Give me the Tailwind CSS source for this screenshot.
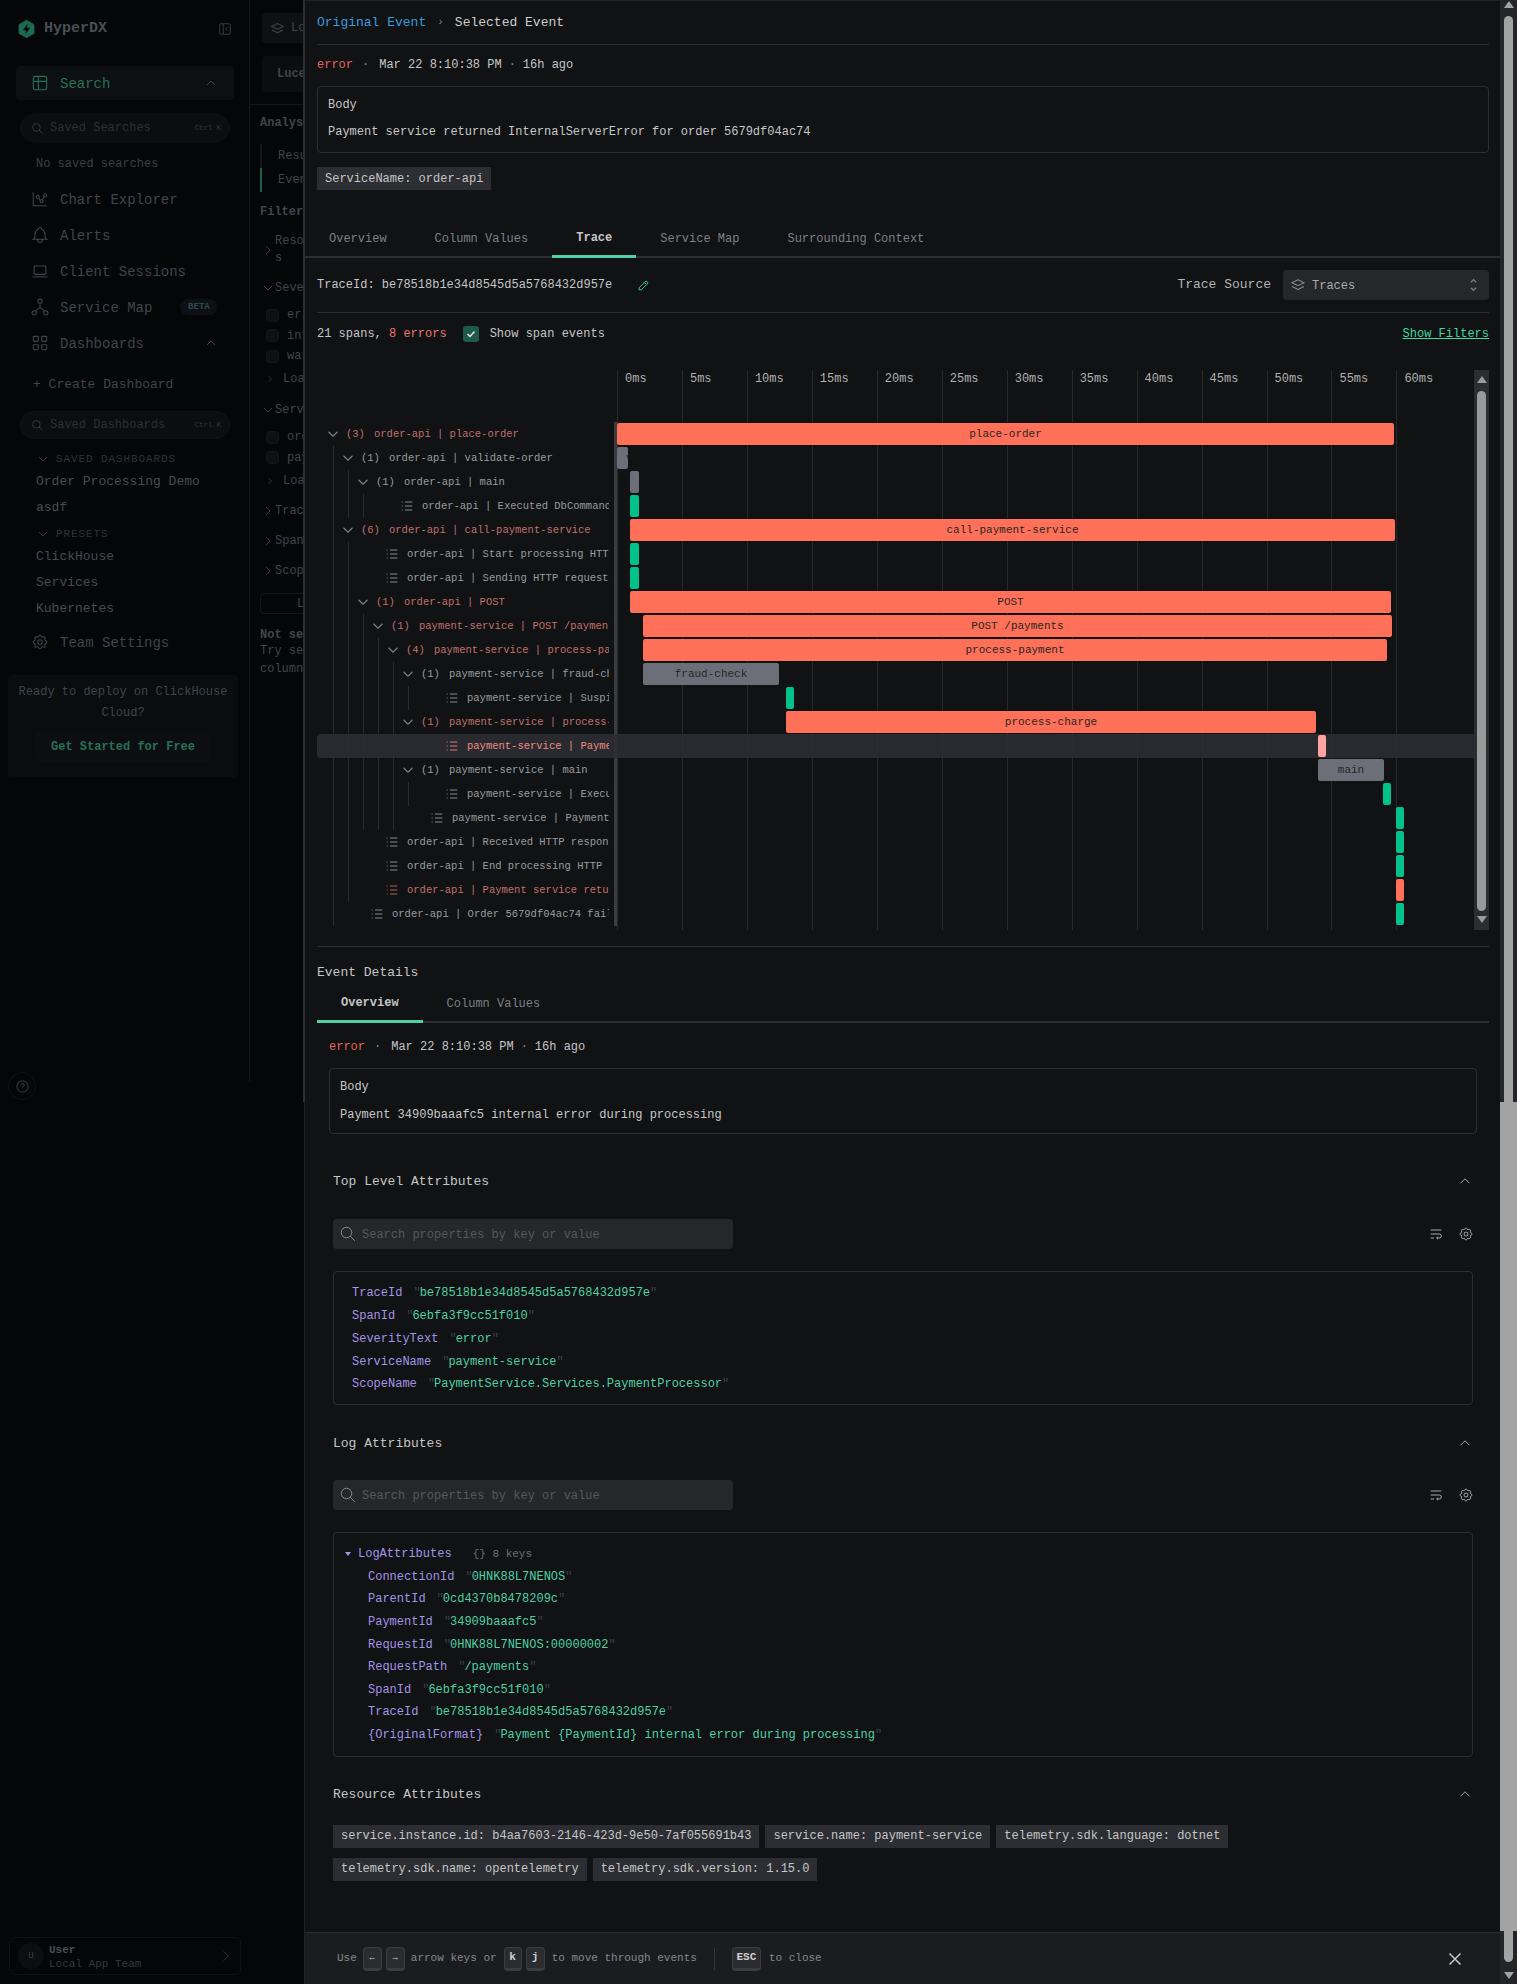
<!DOCTYPE html>
<html lang="en">
<head>
  <meta charset="UTF-8">
  <title>HyperDX</title>
  <meta name="viewport" content="width=device-width, initial-scale=1.0">
  <script src="https://cdn.jsdelivr.net/npm/@tailwindcss/browser@4"></script>
</head>
<body class="bg-[#050608] font-['Liberation_Mono',monospace] text-xs">

<svg class="hidden">
  <symbol id="i-table" viewBox="0 0 24 24"><rect x="4" y="4" width="16" height="16" rx="2"/><path d="M4 10h16M10 4v16"/></symbol>
  <symbol id="i-chart" viewBox="0 0 24 24"><path d="M3 3v18h18"/><circle cx="9" cy="9" r="2"/><circle cx="19" cy="7" r="2"/><circle cx="14" cy="15" r="2"/><path d="M10.16 10.62l2.34 2.88M15.088 13.328l2.837 -4.586"/></symbol>
  <symbol id="i-bell" viewBox="0 0 24 24"><path d="M10 5a2 2 0 1 1 4 0a7 7 0 0 1 4 6v3a4 4 0 0 0 2 3h-16a4 4 0 0 0 2 -3v-3a7 7 0 0 1 4 -6"/><path d="M9 17v1a3 3 0 0 0 6 0v-1"/></symbol>
  <symbol id="i-laptop" viewBox="0 0 24 24"><path d="M3 19h18"/><rect x="5" y="6" width="14" height="10" rx="1"/></symbol>
  <symbol id="i-hierarchy" viewBox="0 0 24 24"><circle cx="12" cy="5" r="2.5"/><circle cx="5" cy="19" r="2.5"/><circle cx="19" cy="19" r="2.5"/><path d="M6.5 17l5.5 -4.5l5.5 4.5M12 7.5v5"/></symbol>
  <symbol id="i-grid" viewBox="0 0 24 24"><rect x="4" y="4" width="6" height="6" rx="1"/><rect x="14" y="4" width="6" height="6" rx="1"/><rect x="4" y="14" width="6" height="6" rx="1"/><rect x="14" y="14" width="6" height="6" rx="1"/></symbol>
  <symbol id="i-gear" viewBox="0 0 24 24"><path d="M10.325 4.317c.426 -1.756 2.924 -1.756 3.35 0a1.724 1.724 0 0 0 2.573 1.066c1.543 -.94 3.31 .826 2.37 2.37a1.724 1.724 0 0 0 1.065 2.572c1.756 .426 1.756 2.924 0 3.35a1.724 1.724 0 0 0 -1.066 2.573c.94 1.543 -.826 3.31 -2.37 2.37a1.724 1.724 0 0 0 -2.572 1.065c-.426 1.756 -2.924 1.756 -3.35 0a1.724 1.724 0 0 0 -2.573 -1.066c-1.543 .94 -3.31 -.826 -2.37 -2.37a1.724 1.724 0 0 0 -1.065 -2.572c-1.756 -.426 -1.756 -2.924 0 -3.35a1.724 1.724 0 0 0 1.066 -2.573c-.94 -1.543 .826 -3.31 2.37 -2.37c1 .608 2.296 .07 2.572 -1.065z"/><circle cx="12" cy="12" r="3"/></symbol>
  <symbol id="i-search" viewBox="0 0 24 24"><circle cx="10" cy="10" r="7"/><path d="M21 21l-6 -6"/></symbol>
  <symbol id="i-up" viewBox="0 0 24 24"><path d="M6 15l6 -6l6 6"/></symbol>
  <symbol id="i-down" viewBox="0 0 24 24"><path d="M6 9l6 6l6 -6"/></symbol>
  <symbol id="i-right" viewBox="0 0 24 24"><path d="M9 6l6 6l-6 6"/></symbol>
  <symbol id="i-stack" viewBox="0 0 24 24"><path d="M12 5l-8 4l8 4l8 -4l-8 -4"/><path d="M4 14l8 4l8 -4"/></symbol>
  <symbol id="i-list" viewBox="0 0 24 24"><path d="M9 6h11M9 12h11M9 18h11M4 6h1.5M4 12h1.5M4 18h1.5"/></symbol>
  <symbol id="i-wrap" viewBox="0 0 24 24"><path d="M4 6h16M4 18h5M4 12h13a3 3 0 0 1 0 6h-4l2 -2m0 4l-2 -2"/></symbol>
</svg>

<div class="relative w-[1517px] h-[1984px] overflow-hidden flex">

  <!-- left nav -->
  <aside class="w-[250px] h-full flex flex-col shrink-0 relative text-[#3f454b]">
    <div class="h-[1082px] border-r border-[#14171a] absolute inset-x-0 top-0"></div>
    <div class="h-[58px] shrink-0 flex items-center pl-[17px] pr-[16px] relative">
      <svg class="w-[19px] h-[20px]" viewBox="0 0 24 24"><path d="M12 1l9.5 5.5v11L12 23l-9.5-5.5v-11z" fill="#1c6b50" stroke="#1c6b50" stroke-linejoin="round"/><path d="M13.5 5L7.5 13.5h4l-1 5.5 6-8.5h-4z" fill="#050608"/></svg>
      <span class="ml-2 text-[15px] font-bold text-[#484e54]">HyperDX</span>
      <svg class="w-[14px] h-[14px] ml-auto mr-[2px] text-[#3c4247]" fill="none" stroke="currentColor" stroke-width="1.5" viewBox="0 0 24 24"><rect x="3" y="3" width="18" height="18" rx="2"/><path d="M9 3v18M16 9l-3 3l3 3"/></svg>
    </div>
    <div class="relative mt-2 mx-4 w-[218px] h-[34px] shrink-0 rounded bg-[#0d0f11] flex items-center pl-[14px] pr-[15px] text-[#26705a] text-sm">
      <svg class="w-[20px] h-[20px]" fill="none" stroke="currentColor" stroke-width="1.3"><use href="#i-table"/></svg>
      <span class="ml-[10px] translate-y-px">Search</span>
      <svg class="w-[16px] h-[16px] ml-auto text-[#3c4247]" fill="none" stroke="currentColor" stroke-width="1.5"><use href="#i-up"/></svg>
    </div>
    <div class="relative mt-[14px] ml-5 w-[210px] h-[28px] shrink-0 rounded-full bg-[#0b0d0f] border border-[#101316] flex items-center pl-[10px] pr-2 text-[#2c3136]">
      <svg class="w-[13px] h-[13px] text-[#3c4247]" fill="none" stroke="currentColor" stroke-width="1.5"><use href="#i-search"/></svg>
      <span class="ml-[6px]">Saved Searches</span>
      <span class="ml-auto text-[8px] tracking-[-0.4px] text-[#33393e]">Ctrl K</span>
    </div>
    <div class="relative mt-3 ml-9 h-[18px] leading-[18px] shrink-0 text-[#394045] translate-y-px">No saved searches</div>

    <div class="relative mt-[9px] flex flex-col text-sm">
      <div class="h-9 flex items-center pl-[31px]"><svg class="w-[18px] h-[18px]" fill="none" stroke="currentColor" stroke-width="1.4"><use href="#i-chart"/></svg><span class="ml-[11px] translate-y-px">Chart Explorer</span></div>
      <div class="h-9 flex items-center pl-[30px]"><svg class="w-[20px] h-[20px]" fill="none" stroke="currentColor" stroke-width="1.3"><use href="#i-bell"/></svg><span class="ml-[10px] translate-y-px">Alerts</span></div>
      <div class="h-9 flex items-center pl-[30px]"><svg class="w-[20px] h-[20px]" fill="none" stroke="currentColor" stroke-width="1.3"><use href="#i-laptop"/></svg><span class="ml-[10px] translate-y-px">Client Sessions</span></div>
      <div class="h-9 flex items-center pl-[30px]"><svg class="w-[20px] h-[20px]" fill="none" stroke="currentColor" stroke-width="1.3"><use href="#i-hierarchy"/></svg><span class="ml-[10px] translate-y-px">Service Map</span><span class="ml-[28px] w-[37px] h-4 rounded-full bg-[#0e1114] text-[9px] font-bold text-[#2f4a55] flex items-center justify-center">BETA</span></div>
      <div class="h-9 flex items-center pl-[30px] pr-[31px]"><svg class="w-[20px] h-[20px]" fill="none" stroke="currentColor" stroke-width="1.3"><use href="#i-grid"/></svg><span class="ml-[10px] translate-y-px">Dashboards</span><svg class="w-[16px] h-[16px] ml-auto text-[#3c4247]" fill="none" stroke="currentColor" stroke-width="1.5"><use href="#i-up"/></svg></div>
    </div>
    <div class="relative mt-[14px] ml-[33px] h-[18px] leading-[18px] text-[13px] translate-y-px">+ Create Dashboard</div>
    <div class="relative mt-[18px] ml-5 w-[210px] h-[28px] shrink-0 rounded-full bg-[#0b0d0f] border border-[#101316] flex items-center pl-[10px] pr-2 text-[#2c3136]">
      <svg class="w-[13px] h-[13px] text-[#3c4247]" fill="none" stroke="currentColor" stroke-width="1.5"><use href="#i-search"/></svg>
      <span class="ml-[6px]">Saved Dashboards</span>
      <span class="ml-auto text-[8px] tracking-[-0.4px] text-[#33393e]">Ctrl K</span>
    </div>
    <div class="relative mt-[13px] ml-[35px] h-[14px] flex items-center text-[11px] tracking-[0.9px] text-[#2e3338]"><svg class="w-[16px] h-[16px] text-[#33393e]" fill="none" stroke="currentColor" stroke-width="1.5"><use href="#i-down"/></svg><span class="ml-[5px]">SAVED DASHBOARDS</span></div>
    <div class="relative mt-[2.5px] ml-9 flex flex-col text-[13px] text-[#464c52]">
      <div class="h-[26px] leading-[26px]">Order Processing Demo</div>
      <div class="h-[26px] leading-[26px]">asdf</div>
    </div>
    <div class="relative mt-[6.5px] ml-[35px] h-[14px] flex items-center text-[11px] tracking-[0.9px] text-[#2e3338]"><svg class="w-[16px] h-[16px] text-[#33393e]" fill="none" stroke="currentColor" stroke-width="1.5"><use href="#i-down"/></svg><span class="ml-[5px]">PRESETS</span></div>
    <div class="relative mt-[2.5px] ml-9 flex flex-col text-[13px] text-[#464c52]">
      <div class="h-[26px] leading-[26px]">ClickHouse</div>
      <div class="h-[26px] leading-[26px]">Services</div>
      <div class="h-[26px] leading-[26px]">Kubernetes</div>
    </div>
    <div class="relative mt-[2.5px] h-9 flex items-center pl-[31px] text-sm"><svg class="w-[18px] h-[18px]" fill="none" stroke="currentColor" stroke-width="1.4"><use href="#i-gear"/></svg><span class="ml-[11px] translate-y-px">Team Settings</span></div>
    <div class="relative mt-[15px] mx-2 w-[230px] h-[102px] bg-[#0a0c0e] rounded flex flex-col items-center pt-[7px]">
      <div class="h-[21px] leading-[21px] whitespace-nowrap">Ready to deploy on ClickHouse</div>
      <div class="h-[21px] leading-[21px]">Cloud?</div>
      <div class="mt-[8px] w-[176px] h-[30px] rounded bg-[#0c0e10] flex items-center justify-center font-bold text-[#26705a]">Get Started for Free</div>
    </div>
    <!-- help bubble -->
    <div class="absolute left-2 top-[1072px] w-7 h-7 rounded-full border border-[#101316] flex items-center justify-center text-[#3c4247]">
      <svg class="w-[15px] h-[15px]" fill="none" stroke="currentColor" stroke-width="1.5" viewBox="0 0 24 24"><circle cx="12" cy="12" r="9"/><path d="M12 17v.01M12 13.5a1.5 1.5 0 0 1 1 -1.5a2.6 2.6 0 1 0 -3 -4"/></svg>
    </div>
    <div class="mt-auto mb-[9px] ml-[9px] w-[232px] h-[38px] shrink-0 rounded-md border border-[#0f1215] flex items-center pl-2 pr-[5px]">
      <div class="w-[26px] h-[26px] rounded-full bg-[#0c0e10] flex items-center justify-center text-[9px] text-[#3c4247]">U</div>
      <div class="ml-[5px] flex flex-col text-[11px] translate-y-px">
        <span class="font-bold text-[#4a5056] leading-[14px]">User</span>
        <span class="text-[#33393e] leading-[14px]">Local App Team</span>
      </div>
      <svg class="w-[18px] h-[18px] ml-auto text-[#3c4247]" fill="none" stroke="currentColor" stroke-width="1.2"><use href="#i-right"/></svg>
    </div>
  </aside>

  <!-- search page behind the drawer -->
  <main class="w-[160px] shrink-0 h-[1082px] overflow-hidden whitespace-nowrap text-[#3f454b]">
    <div class="mt-[13px] ml-3 h-[30px] rounded bg-[#0e1012] flex items-center pl-[7px]">
      <svg class="w-[17px] h-[17px]" fill="none" stroke="currentColor" stroke-width="1.5"><use href="#i-stack"/></svg><span class="ml-[5px]">Logs</span>
    </div>
    <div class="mt-[13px] ml-3 h-9 rounded bg-[#0b0d0f] flex items-center pl-[15px] font-bold">Lucene</div>
    <div class="mt-3 border-t border-[#14171a]"></div>
    <div class="mt-[11px] ml-[10px] h-[14px] leading-[14px] font-bold">Analysis</div>
    <div class="mt-[14px] ml-[10px] flex flex-col">
      <div class="h-6 leading-6 pl-4 border-l-2 border-[#14171a]">Results</div>
      <div class="h-6 leading-6 pl-4 border-l-2 border-[#1d5c48]">Events</div>
    </div>
    <div class="mt-[13px] ml-[10px] h-[14px] leading-[14px] font-bold">Filters</div>
    <div class="mt-[13.5px] ml-[10px] flex items-center h-[34px]">
      <svg class="w-[16px] h-[16px]" fill="none" stroke="currentColor" stroke-width="1.3"><use href="#i-right"/></svg>
      <div class="-ml-[1px] leading-[17px]">Resource<br>s</div>
    </div>
    <div class="mt-[13.5px] ml-[10px] h-4 flex items-center"><svg class="w-[16px] h-[16px]" fill="none" stroke="currentColor" stroke-width="1.3"><use href="#i-down"/></svg><span class="-ml-[1px]">Severity</span></div>
    <div class="mt-[9px] ml-4 flex flex-col">
      <div class="h-[20.5px] flex items-center"><span class="w-[13px] h-[13px] rounded-sm bg-[#0e1012] border border-[#14171a]"></span><span class="ml-2">error</span></div>
      <div class="h-[20.5px] flex items-center"><span class="w-[13px] h-[13px] rounded-sm bg-[#0e1012] border border-[#14171a]"></span><span class="ml-2">info</span></div>
      <div class="h-[20.5px] flex items-center"><span class="w-[13px] h-[13px] rounded-sm bg-[#0e1012] border border-[#14171a]"></span><span class="ml-2">warn</span></div>
    </div>
    <div class="mt-[4.5px] ml-[14px] h-4 flex items-center"><svg class="w-[12px] h-[12px]" fill="none" stroke="currentColor" stroke-width="1.5"><use href="#i-right"/></svg><span class="ml-[7px]">Load more</span></div>
    <div class="mt-[15px] ml-[10px] h-4 flex items-center"><svg class="w-[16px] h-[16px]" fill="none" stroke="currentColor" stroke-width="1.3"><use href="#i-down"/></svg><span class="-ml-[1px]">ServiceName</span></div>
    <div class="mt-[9px] ml-4 flex flex-col">
      <div class="h-[20.5px] flex items-center"><span class="w-[13px] h-[13px] rounded-sm bg-[#0e1012] border border-[#14171a]"></span><span class="ml-2">order-api</span></div>
      <div class="h-[20.5px] flex items-center"><span class="w-[13px] h-[13px] rounded-sm bg-[#0e1012] border border-[#14171a]"></span><span class="ml-2">payment</span></div>
    </div>
    <div class="mt-[5px] ml-[14px] h-4 flex items-center"><svg class="w-[12px] h-[12px]" fill="none" stroke="currentColor" stroke-width="1.5"><use href="#i-right"/></svg><span class="ml-[7px]">Load more</span></div>
    <div class="mt-[14px] ml-[10px] h-4 flex items-center"><svg class="w-[16px] h-[16px]" fill="none" stroke="currentColor" stroke-width="1.3"><use href="#i-right"/></svg><span class="-ml-[1px]">TraceId</span></div>
    <div class="mt-[14px] ml-[10px] h-4 flex items-center"><svg class="w-[16px] h-[16px]" fill="none" stroke="currentColor" stroke-width="1.3"><use href="#i-right"/></svg><span class="-ml-[1px]">SpanName</span></div>
    <div class="mt-[14px] ml-[10px] h-4 flex items-center"><svg class="w-[16px] h-[16px]" fill="none" stroke="currentColor" stroke-width="1.3"><use href="#i-right"/></svg><span class="-ml-[1px]">ScopeName</span></div>
    <div class="mt-[14px] ml-[10px] h-[21px] rounded border border-[#14171a] pl-[36px] leading-[20px]">Load</div>
    <div class="mt-[13px] ml-[10px] h-4 leading-4 font-bold">Not seeing</div>
    <div class="ml-[10px] h-4 leading-4">Try searching</div>
    <div class="mt-[2px] ml-[10px] h-4 leading-4">column:</div>
  </main>

  <!-- event drawer -->
  <section class="absolute left-[304px] top-0 w-[1196px] h-[1984px] bg-[#101214] border-l border-[#202226] border-t text-[#c6c6c6] overflow-hidden">
    <div class="pl-3 pr-[11px]">
      <div class="h-[44px] border-b border-[#2c2e33] flex items-center text-[13px]">
        <span class="text-[#3d9bdc]">Original Event</span>
        <span class="ml-[11px] text-[#808387] text-[11px]">›</span>
        <span class="ml-[11px] text-[#cdcdcd]">Selected Event</span>
      </div>
      <div class="mt-[11px] h-[18px] flex items-center">
        <span class="text-[#e5645a]">error</span>
        <span class="ml-[9px] text-[#808387]">·</span>
        <span class="ml-[10px]">Mar 22 8:10:38 PM</span>
        <span class="ml-[7px] text-[#808387]">·</span>
        <span class="ml-[7px]">16h ago</span>
      </div>
      <div class="mt-3 h-[67px] border border-[#2c2e33] rounded pl-[10px] pt-[9px] text-[#c8c8c8]">
        <div class="h-[18px] leading-[18px]">Body</div>
        <div class="mt-[9px] h-[18px] leading-[18px]">Payment service returned InternalServerError for order 5679df04ac74</div>
      </div>
      <div class="mt-[14px] inline-flex h-[23px] items-center px-2 bg-[#2c2e33]">ServiceName: order-api</div>
    </div>

    <div class="mt-[30px] h-[38px] flex border-b-2 border-[#2c2e33] text-[#7d8084]">
      <div class="px-6 h-[38px] flex items-center">Overview</div>
      <div class="px-6 h-[38px] flex items-center">Column Values</div>
      <div class="px-6 h-[38px] flex items-center font-bold text-[#c6c6c6] border-b-[3px] border-[#4fd1a5]">Trace</div>
      <div class="px-6 h-[38px] flex items-center">Service Map</div>
      <div class="px-6 h-[38px] flex items-center">Surrounding Context</div>
    </div>

    <div class="pl-3 pr-[11px]">
      <div class="mt-3 h-[30px] flex items-center">
        <span>TraceId: be78518b1e34d8545d5a5768432d957e</span>
        <svg class="ml-[25px] w-[13px] h-[13px] text-[#4fd1a5]" fill="none" stroke="currentColor" stroke-width="1.7" viewBox="0 0 24 24"><path d="M4 20h4L19 9a2.8 2.8 0 0 0-4-4L4 16z"/><path d="M13.5 6.5l4 4"/></svg>
        <span class="ml-auto text-[13px] text-[#b4b4b4]">Trace Source</span>
        <div class="ml-3 w-[206px] h-[30px] rounded bg-[#25272b] flex items-center pl-[6px] pr-[10px] text-[#a9abae]">
          <svg class="w-[18px] h-[18px] text-[#8a8c90]" fill="none" stroke="currentColor" stroke-width="1.4"><use href="#i-stack"/></svg>
          <span class="ml-[5px] mt-[2px]">Traces</span>
          <svg class="ml-auto w-[11px] h-[16px] text-[#777a7e]" fill="none" stroke="currentColor" stroke-width="1.5" viewBox="0 0 12 18"><path d="M3 6l3-3l3 3M3 12l3 3l3-3"/></svg>
        </div>
      </div>
      <div class="mt-3 h-[1px] bg-[#2c2e33]"></div>
      <div class="mt-3 h-[18px] flex items-center">
        <span>21 spans, <span class="text-[#e8766d]">8 errors</span></span>
        <span class="ml-[16px] w-4 h-4 rounded-[3px] bg-[#1e5a48] flex items-center justify-center">
          <svg class="w-3 h-3 text-[#e6e6e6]" fill="none" stroke="currentColor" stroke-width="3" viewBox="0 0 24 24"><path d="M5 12l5 5l9 -10"/></svg>
        </span>
        <span class="ml-[11px]">Show span events</span>
        <span class="ml-auto text-[#3fd8a0] underline">Show Filters</span>
      </div>

      <!-- trace waterfall -->
      <div class="mt-[27px] h-[560px] flex">
        <div id="waterfall" class="relative flex-1 overflow-hidden">
          <div id="ticks" class="absolute left-[300px] top-0 bottom-0 right-0"></div>
          <div class="absolute left-[297px] top-[52px] w-[3px] h-[504px] bg-[#3a3c40]"></div>
          <div class="h-[52px]"></div>
          <div id="rows" class="relative"></div>
        </div>
        <div class="relative w-[15px] bg-[#2b2d31] shrink-0">
          <div class="mx-auto mt-[6px] w-0 h-0 border-x-[5px] border-x-transparent border-b-[7px] border-b-[#9a9a9a]"></div>
          <div class="mx-auto mt-[8px] w-[9px] h-[520px] rounded-full bg-[#9a9a9a]"></div>
          <div class="mx-auto mt-[5px] w-0 h-0 border-x-[5px] border-x-transparent border-t-[7px] border-t-[#9a9a9a]"></div>
        </div>
      </div>

      <div class="mt-4 h-[1px] bg-[#2c2e33]"></div>
      <div class="mt-4 h-5 leading-5 text-[13px]">Event Details</div>
      <div class="mt-[2px] h-[38px] flex border-b-2 border-[#2c2e33] text-[#7d8084]">
        <div class="px-6 h-[38px] flex items-center font-bold text-[#c6c6c6] border-b-[3px] border-[#4fd1a5]">Overview</div>
        <div class="px-6 h-[38px] flex items-center">Column Values</div>
      </div>

      <div class="px-3">
        <div class="mt-[15px] h-[18px] flex items-center">
          <span class="text-[#e5645a]">error</span>
          <span class="ml-[9px] text-[#808387]">·</span>
          <span class="ml-[10px]">Mar 22 8:10:38 PM</span>
          <span class="ml-[7px] text-[#808387]">·</span>
          <span class="ml-[7px]">16h ago</span>
        </div>
        <div class="mt-3 h-[66px] border border-[#2c2e33] rounded pl-[10px] pt-[9px] text-[#c8c8c8]">
          <div class="h-[18px] leading-[18px]">Body</div>
          <div class="mt-[10px] h-[18px] leading-[18px]">Payment 34909baaafc5 internal error during processing</div>
        </div>
      </div>

      <div class="px-4">
        <div class="mt-[37px] h-5 flex items-center justify-between text-[13px]">
          <span class="translate-y-px">Top Level Attributes</span>
          <svg class="w-[18px] h-[18px] -mr-[1px] text-[#a9abae]" fill="none" stroke="currentColor" stroke-width="1.3"><use href="#i-up"/></svg>
        </div>
        <div class="mt-[28px] h-[30px] flex items-center">
          <div class="w-[400px] h-[30px] rounded bg-[#25272b] flex items-center pl-[6px] text-[#55585c]">
            <svg class="w-[18px] h-[18px] text-[#8a8c90]" fill="none" stroke="currentColor" stroke-width="1.3"><use href="#i-search"/></svg>
            <span class="ml-[5px] translate-y-px">Search properties by key or value</span>
          </div>
          <svg class="ml-auto w-[16px] h-[16px] text-[#b5b5b5]" fill="none" stroke="currentColor" stroke-width="1.4"><use href="#i-wrap"/></svg>
          <svg class="ml-[14px] -mr-[1px] w-[16px] h-[16px] text-[#b5b5b5]" fill="none" stroke="currentColor" stroke-width="1.4"><use href="#i-gear"/></svg>
        </div>
        <div id="topAttrs" class="mt-[22px] h-[134px] border border-[#2c2e33] rounded pt-[10px] pl-[18px]"></div>

        <div class="mt-[28px] h-5 flex items-center justify-between text-[13px]">
          <span class="translate-y-px">Log Attributes</span>
          <svg class="w-[18px] h-[18px] -mr-[1px] text-[#a9abae]" fill="none" stroke="currentColor" stroke-width="1.3"><use href="#i-up"/></svg>
        </div>
        <div class="mt-[27px] h-[30px] flex items-center">
          <div class="w-[400px] h-[30px] rounded bg-[#25272b] flex items-center pl-[6px] text-[#55585c]">
            <svg class="w-[18px] h-[18px] text-[#8a8c90]" fill="none" stroke="currentColor" stroke-width="1.3"><use href="#i-search"/></svg>
            <span class="ml-[5px] translate-y-px">Search properties by key or value</span>
          </div>
          <svg class="ml-auto w-[16px] h-[16px] text-[#b5b5b5]" fill="none" stroke="currentColor" stroke-width="1.4"><use href="#i-wrap"/></svg>
          <svg class="ml-[14px] -mr-[1px] w-[16px] h-[16px] text-[#b5b5b5]" fill="none" stroke="currentColor" stroke-width="1.4"><use href="#i-gear"/></svg>
        </div>
        <div id="logAttrs" class="mt-[22px] h-[225px] border border-[#2c2e33] rounded pt-[10px] pl-[34px]">
          <div class="h-[22.6px] flex items-center -ml-[23px] text-[#a594e8]">
            <span class="w-0 h-0 border-x-[3.5px] border-x-transparent border-t-[4px] border-t-[#a594e8]"></span>
            <span class="ml-[7px]">LogAttributes</span>
            <span class="ml-[21px] text-[#6b7075] text-[11px]">{} 8 keys</span>
          </div>
        </div>

        <div class="mt-[27px] h-5 flex items-center justify-between text-[13px]">
          <span class="translate-y-px">Resource Attributes</span>
          <svg class="w-[18px] h-[18px] -mr-[1px] text-[#a9abae]" fill="none" stroke="currentColor" stroke-width="1.3"><use href="#i-up"/></svg>
        </div>
        <div class="mt-[21px] flex gap-[6px]">
          <span class="h-[23px] px-2 leading-[23px] bg-[#2c2e33] whitespace-nowrap">service.instance.id: b4aa7603-2146-423d-9e50-7af055691b43</span>
          <span class="h-[23px] px-2 leading-[23px] bg-[#2c2e33] whitespace-nowrap">service.name: payment-service</span>
          <span class="h-[23px] px-2 leading-[23px] bg-[#2c2e33] whitespace-nowrap">telemetry.sdk.language: dotnet</span>
        </div>
        <div class="mt-[10px] flex gap-[6px]">
          <span class="h-[23px] px-2 leading-[23px] bg-[#2c2e33] whitespace-nowrap">telemetry.sdk.name: opentelemetry</span>
          <span class="h-[23px] px-2 leading-[23px] bg-[#2c2e33] whitespace-nowrap">telemetry.sdk.version: 1.15.0</span>
        </div>
      </div>
    </div>

    <!-- keyboard hints -->
    <div class="absolute left-0 bottom-0 w-full h-[52px] bg-[#1a1c1f] border-t border-[#2c2e33] flex items-center pl-[32px] pr-[38px] text-[11px] text-[#86898d]">
      <span>Use</span>
      <span class="ml-[6px] w-[19px] h-6 rounded bg-[#2a2c30] border border-[#3a3c40] border-b-[3px] flex items-center justify-center text-[#cfcfcf] font-bold text-[9px]">←</span>
      <span class="ml-[4px] w-[19px] h-6 rounded bg-[#2a2c30] border border-[#3a3c40] border-b-[3px] flex items-center justify-center text-[#cfcfcf] font-bold text-[9px]">→</span>
      <span class="ml-[6px]">arrow keys or</span>
      <span class="ml-[7px] w-[18px] h-6 rounded bg-[#2a2c30] border border-[#3a3c40] border-b-[3px] flex items-center justify-center text-[#cfcfcf] font-bold">k</span>
      <span class="ml-[4px] w-[19px] h-6 rounded bg-[#2a2c30] border border-[#3a3c40] border-b-[3px] flex items-center justify-center text-[#cfcfcf] font-bold">j</span>
      <span class="ml-[7px]">to move through events</span>
      <span class="ml-[17px] w-[1px] h-[22px] bg-[#33353a]"></span>
      <span class="ml-[17px] w-[29px] h-6 rounded bg-[#2a2c30] border border-[#3a3c40] border-b-[3px] flex items-center justify-center text-[#cfcfcf] font-bold">ESC</span>
      <span class="ml-2">to close</span>
      <svg class="ml-auto w-[14px] h-[14px] text-[#c9c9c9]" fill="none" stroke="currentColor" stroke-width="1.5" viewBox="0 0 14 14"><path d="M1.5 1.5l11 11M12.5 1.5l-11 11"/></svg>
    </div>
  </section>

  <!-- brighter drawer edge over the first part of the page -->
  <div class="absolute left-[303px] top-0 w-[2px] h-[1102px] bg-[#2d2f33]"></div>

  <!-- page scrollbar, with the grey stuck block from the capture -->
  <div class="absolute left-[1500px] top-0 w-[17px] h-[1984px] bg-[#232528]">
    <div class="absolute left-[4px] top-[1px] w-0 h-0 border-x-[5px] border-x-transparent border-b-[7px] border-b-[#a3a3a3]"></div>
    <div class="absolute left-[4px] top-[16px] bottom-[22px] w-[9px] rounded-full bg-[#a3a3a3]"></div>
    <div class="absolute left-[4px] bottom-[5px] w-0 h-0 border-x-[5px] border-x-transparent border-t-[7px] border-t-[#a3a3a3]"></div>
    <div class="absolute left-0 right-0 top-[1102px] h-[829px] bg-[#a3a3a3]"></div>
  </div>
</div>

<script>
  // d = depth, n = child count (chevron rows), g = guide depths drawn left of the row
  var spans = [
    { s: 'order-api', t: 'place-order', d: 0, n: 3, err: 1, from: 617, to: 1394, c: 'red', label: 'place-order', g: [] },
    { s: 'order-api', t: 'validate-order', d: 1, n: 1, from: 617, to: 628, c: 'grey', clip: 'validate-order', g: [0] },
    { s: 'order-api', t: 'main', d: 2, n: 1, from: 630, to: 639, c: 'grey', clip: 'main', g: [0, 1] },
    { s: 'order-api', t: 'Executed DbCommand (2ms)', d: 3, from: 630, to: 639, c: 'green', g: [0, 1, 2] },
    { s: 'order-api', t: 'call-payment-service', d: 1, n: 6, err: 1, from: 630, to: 1395, c: 'red', label: 'call-payment-service', g: [0] },
    { s: 'order-api', t: 'Start processing HTTP request', d: 2, from: 630, to: 639, c: 'green', g: [0, 1] },
    { s: 'order-api', t: 'Sending HTTP request POST', d: 2, from: 630, to: 639, c: 'green', g: [0, 1] },
    { s: 'order-api', t: 'POST', d: 2, n: 1, err: 1, from: 630, to: 1391, c: 'red', label: 'POST', g: [0, 1] },
    { s: 'payment-service', t: 'POST /payments', d: 3, n: 1, err: 1, from: 643, to: 1392, c: 'red', label: 'POST /payments', g: [0, 1, 2] },
    { s: 'payment-service', t: 'process-payment', d: 4, n: 4, err: 1, from: 643, to: 1387, c: 'red', label: 'process-payment', g: [0, 1, 2, 3] },
    { s: 'payment-service', t: 'fraud-check', d: 5, n: 1, from: 643, to: 779, c: 'grey', label: 'fraud-check', g: [0, 1, 2, 3, 4] },
    { s: 'payment-service', t: 'Suspicious activity', d: 6, from: 786, to: 794, c: 'green', g: [0, 1, 2, 3, 4, 5] },
    { s: 'payment-service', t: 'process-charge', d: 5, n: 1, err: 1, from: 786, to: 1316, c: 'red', label: 'process-charge', g: [0, 1, 2, 3, 4] },
    { s: 'payment-service', t: 'Payment 34909baaafc5', d: 6, err: 1, sel: 1, from: 1318, to: 1326, c: 'pink', g: [0, 1, 2, 3, 4] },
    { s: 'payment-service', t: 'main', d: 5, n: 1, from: 1318, to: 1384, c: 'grey', label: 'main', g: [0, 1, 2, 3, 4] },
    { s: 'payment-service', t: 'Executed DbCommand', d: 6, from: 1383, to: 1391, c: 'green', g: [0, 1, 2, 3, 4, 5] },
    { s: 'payment-service', t: 'Payment failed', d: 5, from: 1396, to: 1404, c: 'green', g: [0, 1, 2, 3, 4] },
    { s: 'order-api', t: 'Received HTTP response', d: 2, from: 1396, to: 1404, c: 'green', g: [0, 1] },
    { s: 'order-api', t: 'End processing HTTP', d: 2, from: 1396, to: 1404, c: 'green', g: [0, 1] },
    { s: 'order-api', t: 'Payment service returned', d: 2, err: 1, from: 1396, to: 1404, c: 'red', g: [0, 1] },
    { s: 'order-api', t: 'Order 5679df04ac74 failed', d: 1, from: 1396, to: 1404, c: 'green', g: [0] }
  ];

  var barClass = {
    red: 'bg-[#ff7059]',
    grey: 'bg-[#6c6f78]',
    green: 'bg-[#00c28a]',
    pink: 'bg-[#ffa3a0]'
  };

  // time axis
  var ticks = document.getElementById('ticks');
  for (var k = 0; k <= 12; k++) {
    var tick = document.createElement('div');
    tick.className = 'absolute top-0 bottom-0 border-l border-[#26282b] pl-[7px] pt-[1px] h-full text-[#b0b0b0] leading-[16px] whitespace-nowrap';
    tick.style.left = (k * 64.95) + 'px';
    tick.textContent = (k * 5) + 'ms';
    ticks.appendChild(tick);
  }

  // span rows
  var rows = document.getElementById('rows');
  spans.forEach(function (sp) {
    var row = document.createElement('div');
    row.className = sp.sel ? 'relative flex h-6 bg-[#2c2e33]/90 rounded-l' : 'relative flex h-6';

    var left = document.createElement('div');
    left.className = 'relative w-[292px] shrink-0 overflow-hidden whitespace-nowrap flex items-center h-6 text-[10.5px]';
    var color = sp.sel ? 'text-[#ef8a80]' : (sp.err ? 'text-[#c2706a]' : 'text-[#9a9c9f]');
    left.className += ' ' + color;

    sp.g.forEach(function (g) {
      var line = document.createElement('span');
      line.className = 'absolute top-0 bottom-0 w-[1px] bg-[#2a2c30]';
      line.style.left = (15.5 + g * 15) + 'px';
      left.appendChild(line);
    });

    var html = '';
    if (sp.n) {
      html = '<svg class="absolute w-[18px] h-[18px] text-[#808387]" style="left:' + (6.7 + sp.d * 15) + 'px" fill="none" stroke="currentColor" stroke-width="1.5"><use href="#i-down"/></svg>' +
        '<span class="absolute" style="left:' + (29 + sp.d * 15) + 'px">(' + sp.n + ')</span>' +
        '<span class="absolute" style="left:' + (57 + sp.d * 15) + 'px">' + sp.s + ' | ' + sp.t + '</span>';
    } else {
      html = '<svg class="absolute w-[16px] h-[16px]" style="left:' + (37 + sp.d * 15) + 'px" fill="none" stroke="currentColor" stroke-width="1.3"><use href="#i-list"/></svg>' +
        '<span class="absolute" style="left:' + (60 + sp.d * 15) + 'px">' + sp.s + ' | ' + sp.t + '</span>';
    }
    left.insertAdjacentHTML('beforeend', html);
    row.appendChild(left);

    var track = document.createElement('div');
    track.className = 'absolute left-[300px] right-0 top-0 h-6';
    var bar = document.createElement('div');
    bar.className = 'absolute top-[1px] h-[22px] rounded-[2px] overflow-hidden whitespace-nowrap text-[11px] leading-[22px] text-[#262626] ' + barClass[sp.c];
    if (sp.label) {
      bar.className += ' text-center';
      bar.textContent = sp.label;
    } else if (sp.clip) {
      bar.className += ' pl-[9px]';
      bar.textContent = sp.clip;
    }
    bar.style.left = (sp.from - 617) + 'px';
    bar.style.width = (sp.to - sp.from) + 'px';
    track.appendChild(bar);
    row.appendChild(track);
    rows.appendChild(row);
  });

  // key / value lists
  function attrRow(key, val, height) {
    var r = document.createElement('div');
    r.className = 'flex items-center whitespace-nowrap';
    r.style.height = height + 'px';
    r.innerHTML = '<span class="text-[#a594e8]">' + key + '</span>' +
      '<span class="ml-[11px] -mr-[1px] text-[#3e4145]">"</span><span class="text-[#4fd1a5]">' + val + '</span><span class="text-[#3e4145]">"</span>';
    return r;
  }

  var top5 = [
    ['TraceId', 'be78518b1e34d8545d5a5768432d957e'],
    ['SpanId', '6ebfa3f9cc51f010'],
    ['SeverityText', 'error'],
    ['ServiceName', 'payment-service'],
    ['ScopeName', 'PaymentService.Services.PaymentProcessor']
  ];
  top5.forEach(function (a) {
    document.getElementById('topAttrs').appendChild(attrRow(a[0], a[1], 22.75));
  });

  var logs = [
    ['ConnectionId', '0HNK88L7NENOS'],
    ['ParentId', '0cd4370b8478209c'],
    ['PaymentId', '34909baaafc5'],
    ['RequestId', '0HNK88L7NENOS:00000002'],
    ['RequestPath', '/payments'],
    ['SpanId', '6ebfa3f9cc51f010'],
    ['TraceId', 'be78518b1e34d8545d5a5768432d957e'],
    ['{OriginalFormat}', 'Payment {PaymentId} internal error during processing']
  ];
  logs.forEach(function (a) {
    document.getElementById('logAttrs').appendChild(attrRow(a[0], a[1], 22.6));
  });
</script>
</body>
</html>
